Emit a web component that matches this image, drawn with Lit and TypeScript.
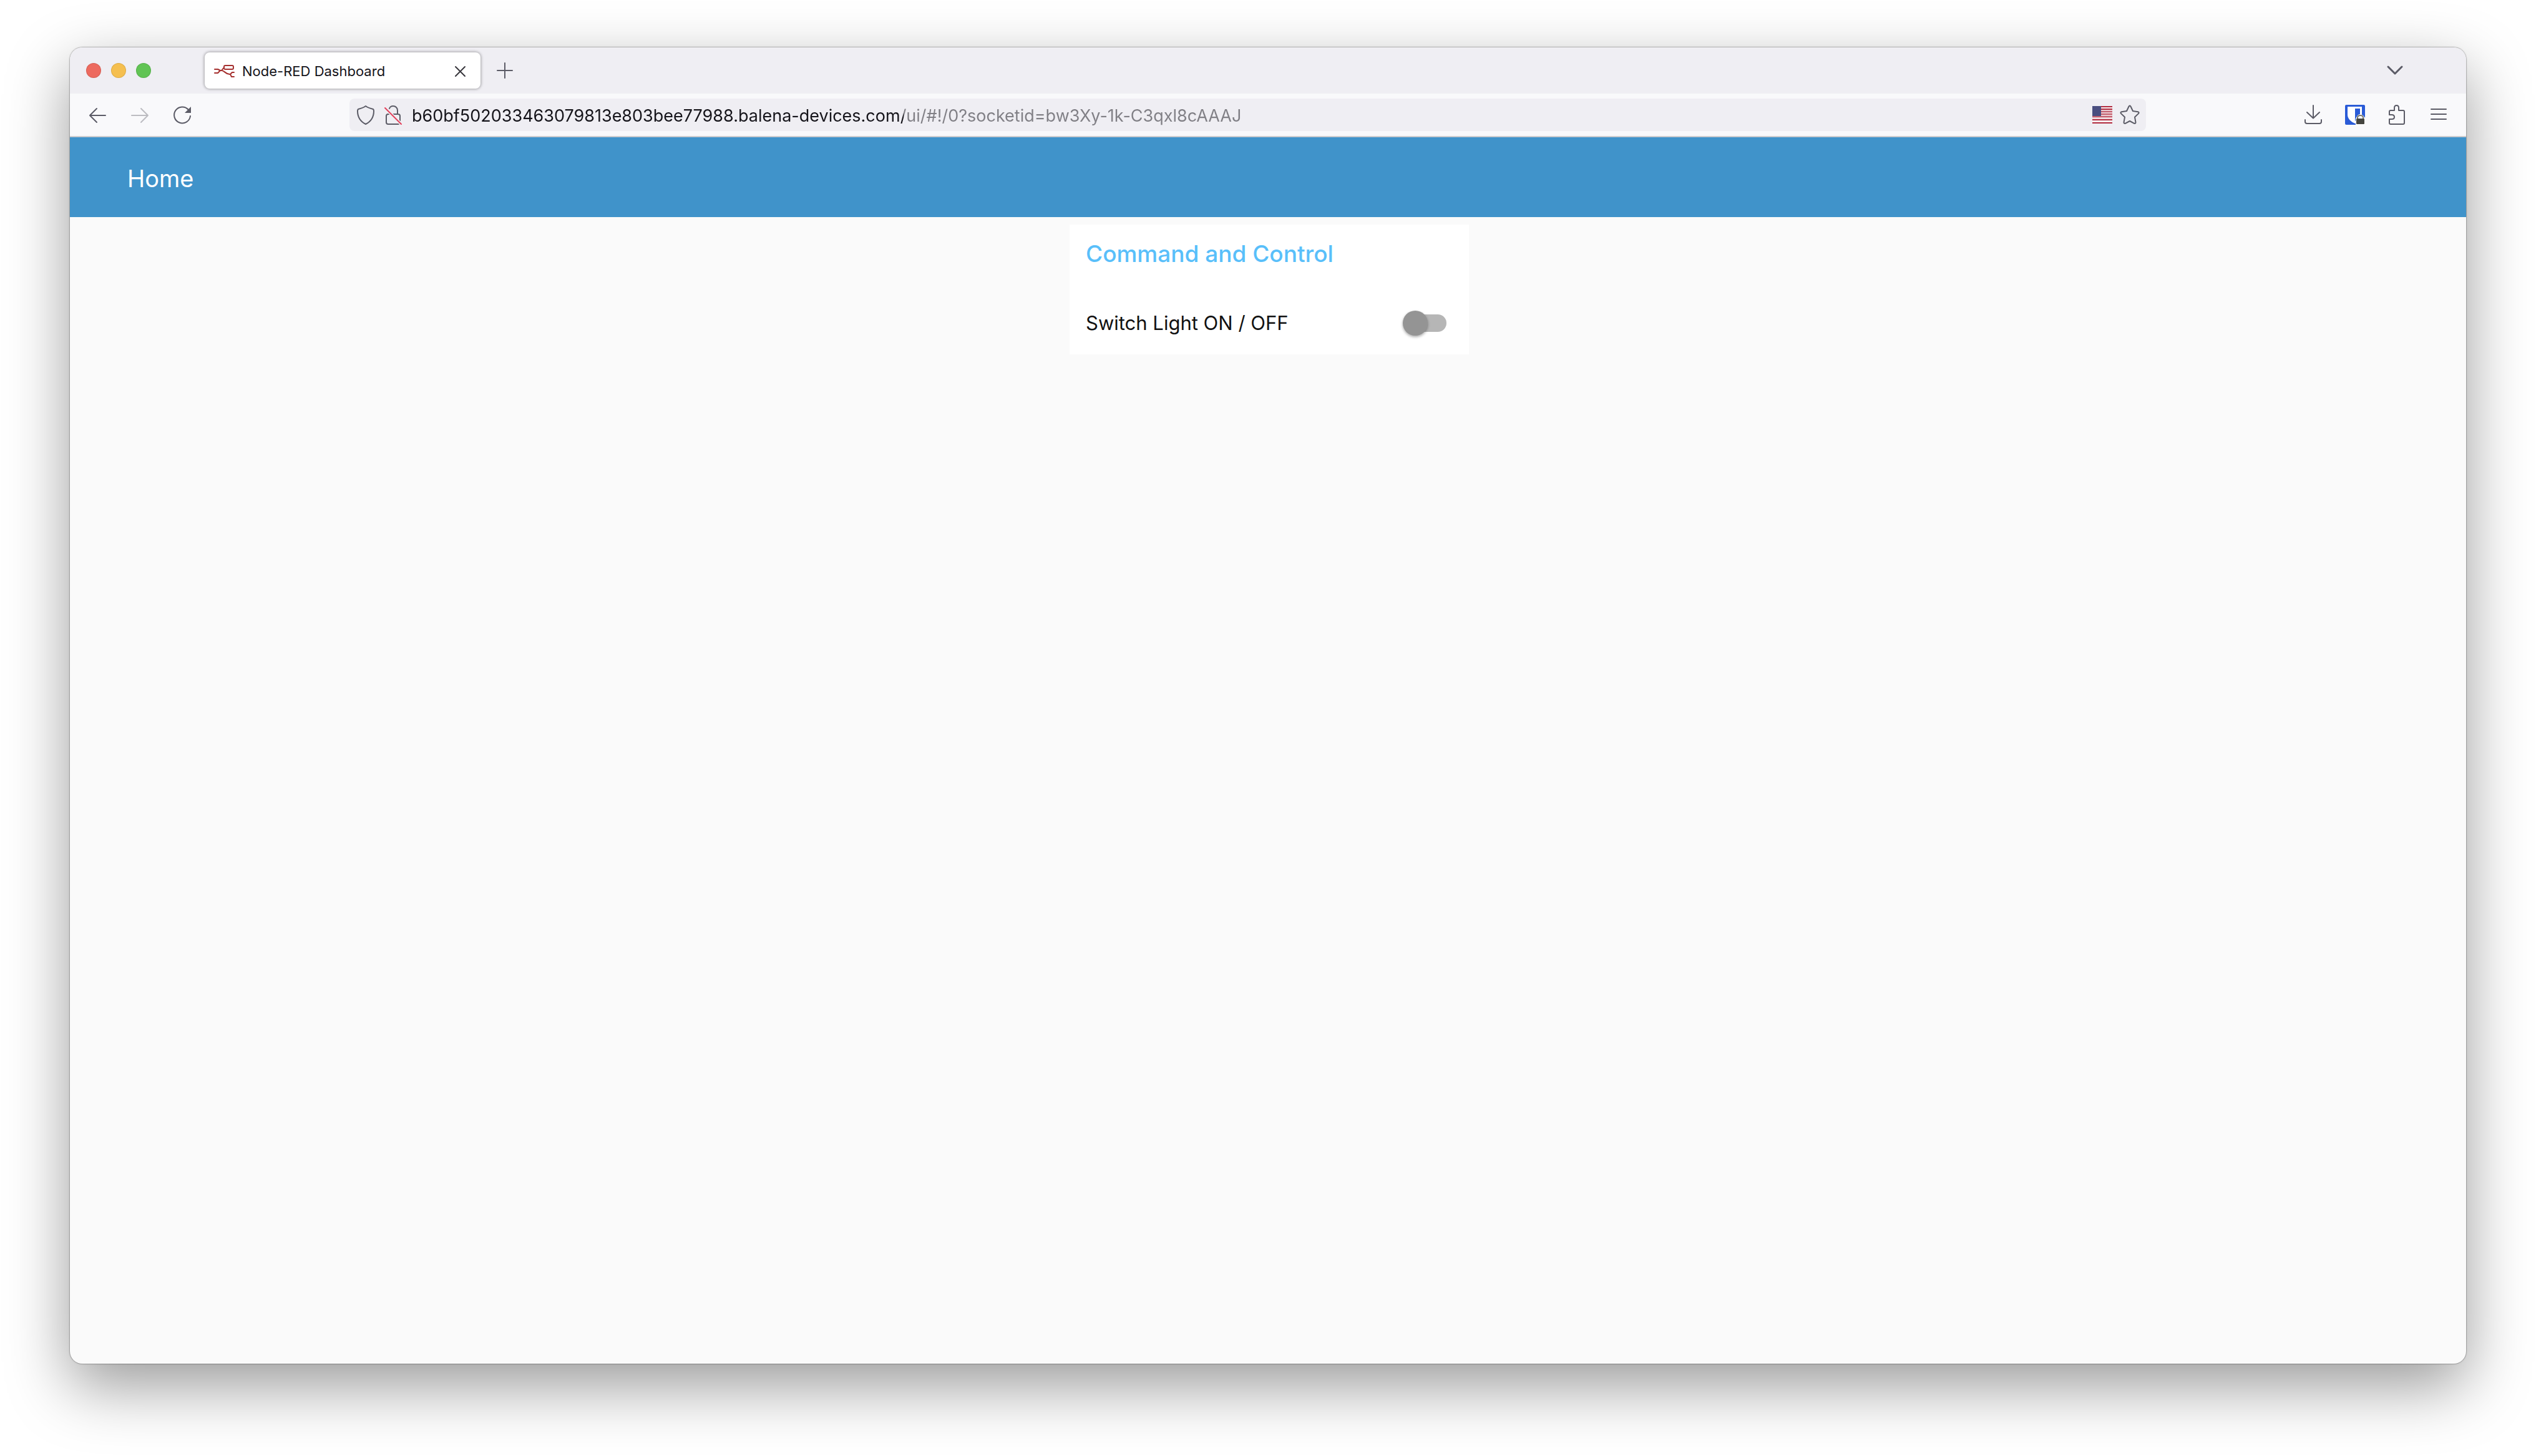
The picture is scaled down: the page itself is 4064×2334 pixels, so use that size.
import { LitElement, html, css, svg } from "lit";
import { customElement, property, state } from "lit/decorators.js";

const icons = {
  back: svg`<path d="M29 17H4M15 6 4 17l11 11" />`,
  forward: svg`<path d="M3 17h26M18 6l11 11-11 11" />`,
  reload: svg`<path d="M26 8A13 13 0 1 0 29 18" /><path d="M30 3v10H20z" fill="currentColor" stroke="none" />`,
  plus: svg`<path d="M16 4v24M4 16h24" />`,
  close: svg`<path d="m8 9 15 15M23 9 8 24" />`,
  chevron: svg`<path d="m5 10 11 11 11-11" stroke-width="3" />`,
  shield: svg`<path d="M16 2c4 3 8 4 12 5 1 1 1 2 1 3 0 10-5 17-13 21C8 27 3 20 3 10c0-1 0-2 1-3 4-1 8-2 12-5z" />`,
  lock: svg`<path d="M10 6c1-3 3-4 6-4 4 0 7 3 7 7v6M8 15h16q3 0 3 3v10q0 3-3 3H8q-3 0-3-3V18q0-3 3-3z" /><path d="M2 4l28 28" stroke="#efeef3" stroke-width="5" /><path d="M3 5l26 26" stroke="#e2405c" />`,
  star: svg`<path d="M14.600 2.500q1.400-2 2.800 0l3.600 7.500 8.200 1.200q2.200.8.900 2.700L24 19.800l1.500 8.300q0 2.300-2.400 1.700L16 26l-7.100 3.800q-2.400.6-2.400-1.700L8 19.800l-6.100-5.900q-1.300-1.900.9-2.700L11 10z" />`,
  download: svg`<path d="M16 1v20M6 12l10 9.500L26 12M3 24v3q0 3 3 3h20q3 0 3-3v-3" />`,
  puzzle: svg`<path d="M12 9V5q0-4 3.500-4T19 5v4h7q2 0 2 2v18q0 2-2 2H6q-2 0-2-2v-6h4q4 0 4-3.500T8 16H4v-5q0-2 2-2z" />`,
  menu: svg`<path d="M4 7h24M4 15h24M4 23h24" />`,
  vault: svg`<rect width="32" height="32" rx="2" fill="#2a5bd7" stroke="none" />
    <path d="M4 3h23v13c0 6-4 11-11 14C9 27 4 22 4 16z" fill="#fff" stroke="none" />
    <path d="M16 6h8v11c0 3-3 6-8 9z" fill="#2a5bd7" stroke="none" />
    <path d="M20 17q4-4 9 0l3 4v11H17V22z" fill="#fff" stroke="none" />
    <path d="M20 23v-2.500q0-3.500 4.500-3.500t4.500 3.500V23" stroke="#77776f" />
    <rect x="18" y="22" width="13" height="9" rx="1" fill="#45453f" stroke="none" />`,
  flow: svg`<g stroke="#a5302f"><path d="M0 13h5l4 2-4 4H0M9 15h2l4-5" /><rect x="15" y="7" width="15" height="6" rx="2" /><path d="M11 15c5 0 6 6 13 6M31 18h-3l-3 3 2 4h4" /></g>`,
  flag: svg`<rect y="2" width="32" height="28" fill="#f7eef0" stroke="none" />
    <path d="M0 3h32M0 7h32M0 11h32M0 15h32M0 19h32M0 24h32M0 29h32" stroke="#b22b3f" stroke-linecap="butt" />
    <rect y="8" width="32" height="14" fill="#d9a0aa" opacity=".45" stroke="none" />
    <rect y="2" width="14" height="16" fill="#4a4e80" stroke="none" />`,
};

@customElement("ui-icon")
class UiIcon extends LitElement {
  @property() name: keyof typeof icons = "menu";
  static styles = css`
    :host { display: block; flex: none; width: 32px; height: 32px; }
    .glyph { display: block; width: 100%; height: 100%; overflow: visible; }
  `;
  render() {
    return html`<svg class="glyph" viewBox="0 0 32 32" fill="none" stroke="currentColor" stroke-width="2"
      stroke-linecap="round" stroke-linejoin="round" aria-hidden="true">${icons[this.name]}</svg>`;
  }
}

@customElement("browser-tabs")
class BrowserTabs extends LitElement {
  static styles = css`
    :host { display: flex; align-items: center; height: 74px; padding: 0 28px 0 26px; background: #efeef3; color: #15141a; }
    .lights { display: flex; gap: 16px; margin-right: 86px; }
    button { display: grid; place-items: center; padding: 0; border: 0; background: none; font: inherit; color: #5b5b66; }
    .light { width: 24px; height: 24px; border-radius: 50%; box-shadow: inset 0 0 0 1px rgba(0, 0, 0, 0.1); }
    .red { background: #ed6a5f; }
    .amber { background: #f5bf4f; }
    .green { background: #61c454; }
    .tab { display: flex; align-items: center; gap: 12px; box-sizing: border-box; width: 442px; height: 58px;
      padding: 2px 16px 0; border-radius: 8px; background: #fff; box-shadow: 0 0 4px 1px rgba(0, 0, 0, 0.32); }
    .title { flex: 1; font-size: 22px; line-height: 32px; }
    .add { width: 64px; height: 64px; margin-left: 7px; }
    .all { width: 64px; height: 64px; margin: 0 54px 0 auto; }
    .close { color: #38373d; }
  `;
  render() {
    return html`
      <div class="lights">
        <button class="light red" aria-label="Close window"></button>
        <button class="light amber" aria-label="Minimize window"></button>
        <button class="light green" aria-label="Zoom window"></button>
      </div>
      <div class="tab">
        <ui-icon name="flow"></ui-icon>
        <span class="title">Node-RED Dashboard</span>
        <button class="close" aria-label="Close tab"><ui-icon name="close"></ui-icon></button>
      </div>
      <button class="add" aria-label="New tab"><ui-icon name="plus"></ui-icon></button>
      <button class="all" aria-label="List all tabs"><ui-icon name="chevron"></ui-icon></button>
    `;
  }
}

@customElement("browser-toolbar")
class BrowserToolbar extends LitElement {
  static styles = css`
    :host { display: flex; align-items: center; height: 68px; padding: 0 12px; background: #f9f9fb;
      border-bottom: 2px solid #cccccf; color: #5b5b66; }
    .group { display: flex; gap: 4px; }
    .actions { gap: 3px; }
    button { display: grid; place-items: center; width: 64px; height: 64px; padding: 0; border: 0; background: none; color: inherit; }
    button:disabled { color: #bcbcc1; }
    .field { display: flex; flex: 1; align-items: center; box-sizing: border-box; height: 52px; margin: 0 236px;
      padding: 0 4px; border-radius: 8px; background: #efeef3; }
    .field button { width: 44px; }
    .address { flex: 1; min-width: 0; height: 40px; margin: 0; padding: 4px 0 0 8px; border: 0; outline: 0;
      font: 400 27px/40px Inter, "Liberation Sans", sans-serif; color: transparent;
      background: linear-gradient(to right, #15141a 796px, #807f85 796px); -webkit-background-clip: text; background-clip: text; }
  `;
  render() {
    return html`
      <div class="group">
        <button aria-label="Back"><ui-icon name="back"></ui-icon></button>
        <button aria-label="Forward" disabled><ui-icon name="forward"></ui-icon></button>
        <button aria-label="Reload"><ui-icon name="reload"></ui-icon></button>
      </div>
      <div class="field">
        <button aria-label="Tracking protection"><ui-icon name="shield"></ui-icon></button>
        <button aria-label="Connection not secure"><ui-icon name="lock"></ui-icon></button>
        <input class="address" type="text" aria-label="Address" spellcheck="false"
          .value=${"b60bf502033463079813e803bee77988.balena-devices.com/ui/#!/0?socketid=bw3Xy-1k-C3qxl8cAAAJ"} />
        <button aria-label="Site region"><ui-icon name="flag"></ui-icon></button>
        <button aria-label="Bookmark this page"><ui-icon name="star"></ui-icon></button>
      </div>
      <div class="group actions">
        <button aria-label="Downloads"><ui-icon name="download"></ui-icon></button>
        <button aria-label="Password vault"><ui-icon name="vault"></ui-icon></button>
        <button aria-label="Extensions"><ui-icon name="puzzle"></ui-icon></button>
        <button aria-label="Application menu"><ui-icon name="menu"></ui-icon></button>
      </div>
    `;
  }
}

@customElement("app-root")
class AppRoot extends LitElement {
  @state() private on = false;

  static styles = css`
    :host { display: flex; box-sizing: border-box; min-height: 100vh; padding: 76px 112px 148px; background: #fff;
      font-family: Inter, "Liberation Sans", sans-serif; }
    .window { flex: 1; display: flex; flex-direction: column; min-width: 0; border-radius: 20px; background: #fafafa;
      box-shadow: 0 0 0 1px rgba(0, 0, 0, 0.15), 0 0 3px rgba(0, 0, 0, 0.25), 0 36px 100px rgba(0, 0, 0, 0.4); }
    .chrome { border-radius: 20px 20px 0 0; overflow: hidden; }
    .banner { display: flex; align-items: center; box-sizing: border-box; height: 128px; padding: 4px 92px 0; background: #4093ca; color: #fff; }
    .page { margin: 0; font-size: 38px; line-height: 48px; font-weight: 400; }
    .content { display: flex; justify-content: center; padding: 12px 0 12px 4px; }
    .card { box-sizing: border-box; width: 640px; padding: 21px 36px 0 26px; background: #fff; }
    .heading { margin: 0; font-size: 37px; line-height: 52px; font-weight: 500; color: #59bffa; }
    .row { display: flex; align-items: center; justify-content: space-between; height: 96px; margin: 37px 0 2px;
      font-size: 31px; line-height: 40px; color: #111; }
    .switch { appearance: none; display: flex; align-items: center; width: 68px; height: 28px; margin: 0; border-radius: 14px; background: #b6b6b6; }
    .switch::before { content: ""; width: 40px; height: 40px; margin: 0 -2px; border-radius: 50%; background: #949494; box-shadow: 0 2px 4px rgba(0, 0, 0, 0.35); }
    .switch:checked { justify-content: flex-end; background: #a0c9e5; }
    .switch:checked::before { background: #4093ca; }
  `;

  render() {
    return html`
      <div class="window">
        <div class="chrome">
          <browser-tabs></browser-tabs>
          <browser-toolbar></browser-toolbar>
        </div>
        <header class="banner"><h1 class="page">Home</h1></header>
        <main class="content">
          <section class="card">
            <h2 class="heading">Command and Control</h2>
            <div class="row">
              <label for="light">Switch Light ON / OFF</label>
              <input id="light" class="switch" type="checkbox" role="switch" .checked=${this.on}
                @change=${(e: Event) => (this.on = (e.target as HTMLInputElement).checked)} />
            </div>
          </section>
        </main>
      </div>
    `;
  }
}
